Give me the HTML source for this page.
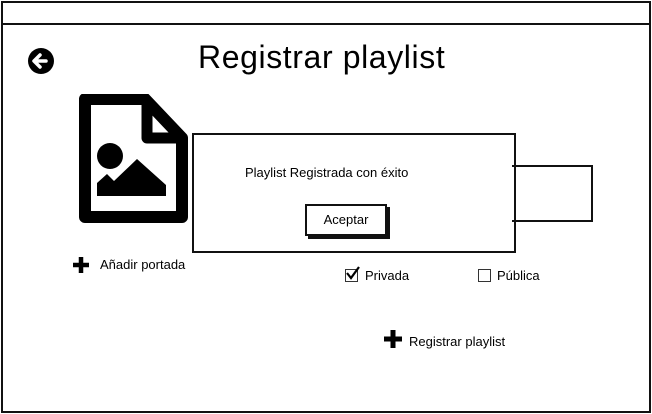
<!DOCTYPE html>
<html><head><style>
body{margin:0;width:652px;height:414px;background:#fff;font-family:"Liberation Sans",sans-serif;color:#000;position:relative;overflow:hidden}
.a{position:absolute}
</style></head><body>
<div class="a" style="left:1px;top:1px;width:646px;height:408px;border:2px solid #111"></div>
<div class="a" style="left:1px;top:23px;width:650px;height:2px;background:#111"></div>
<svg class="a" style="left:27px;top:47px" width="30" height="28" viewBox="0 0 30 28"><circle cx="14" cy="14" r="13" fill="#000"/><path d="M19 14H8M13 8l-6 6 6 6" stroke="#fff" stroke-width="3.5" fill="none" stroke-linecap="round" stroke-linejoin="round"/></svg>
<div class="a" style="left:198px;top:39px;font-size:32px;letter-spacing:0.6px">Registrar playlist</div>
<svg class="a" style="left:79px;top:94px" width="110" height="130" viewBox="0 0 110 130"><path d="M6 5H66L103 44V123H6Z" fill="none" stroke="#000" stroke-width="12" stroke-linejoin="round"/><path d="M68 5V44H103" fill="none" stroke="#000" stroke-width="11" stroke-linejoin="round"/><circle cx="31" cy="62" r="13"/><path d="M18 102V89L28 80 35 87 58 65 87 91V102Z"/></svg>
<div class="a" style="left:192px;top:133px;width:320px;height:116px;border:2px solid #111;background:#fff"></div>
<div class="a" style="left:512px;top:165px;width:79px;height:53px;border:2px solid #111;border-left:none"></div>
<div class="a" style="left:245px;top:165px;font-size:13px">Playlist Registrada con éxito</div>
<div class="a" style="left:305px;top:204px;width:78px;height:28px;border:2px solid #111;box-shadow:3px 3px 0 #111;font-size:13px;line-height:28px;text-align:center;background:#fff">Aceptar</div>
<svg class="a" style="left:72px;top:256px" width="18" height="18"><path d="M9 1V17M1 9H17" stroke="#000" stroke-width="4.5"/></svg>
<div class="a" style="left:100px;top:257px;font-size:13px">Añadir portada</div>
<div class="a" style="left:345px;top:269px;width:11px;height:11px;border:1.5px solid #333"></div>
<svg class="a" style="left:345px;top:265px" width="16" height="16"><path d="M2 8l4 5L14 2" stroke="#000" stroke-width="2.2" fill="none"/></svg>
<div class="a" style="left:365px;top:268px;font-size:13px">Privada</div>
<div class="a" style="left:478px;top:269px;width:11px;height:11px;border:1.5px solid #333"></div>
<div class="a" style="left:497px;top:268px;font-size:13px">Pública</div>
<svg class="a" style="left:383px;top:329px" width="20" height="20"><path d="M10 1V19M1 10H19" stroke="#000" stroke-width="5"/></svg>
<div class="a" style="left:409px;top:334px;font-size:13px">Registrar playlist</div>
</body></html>
